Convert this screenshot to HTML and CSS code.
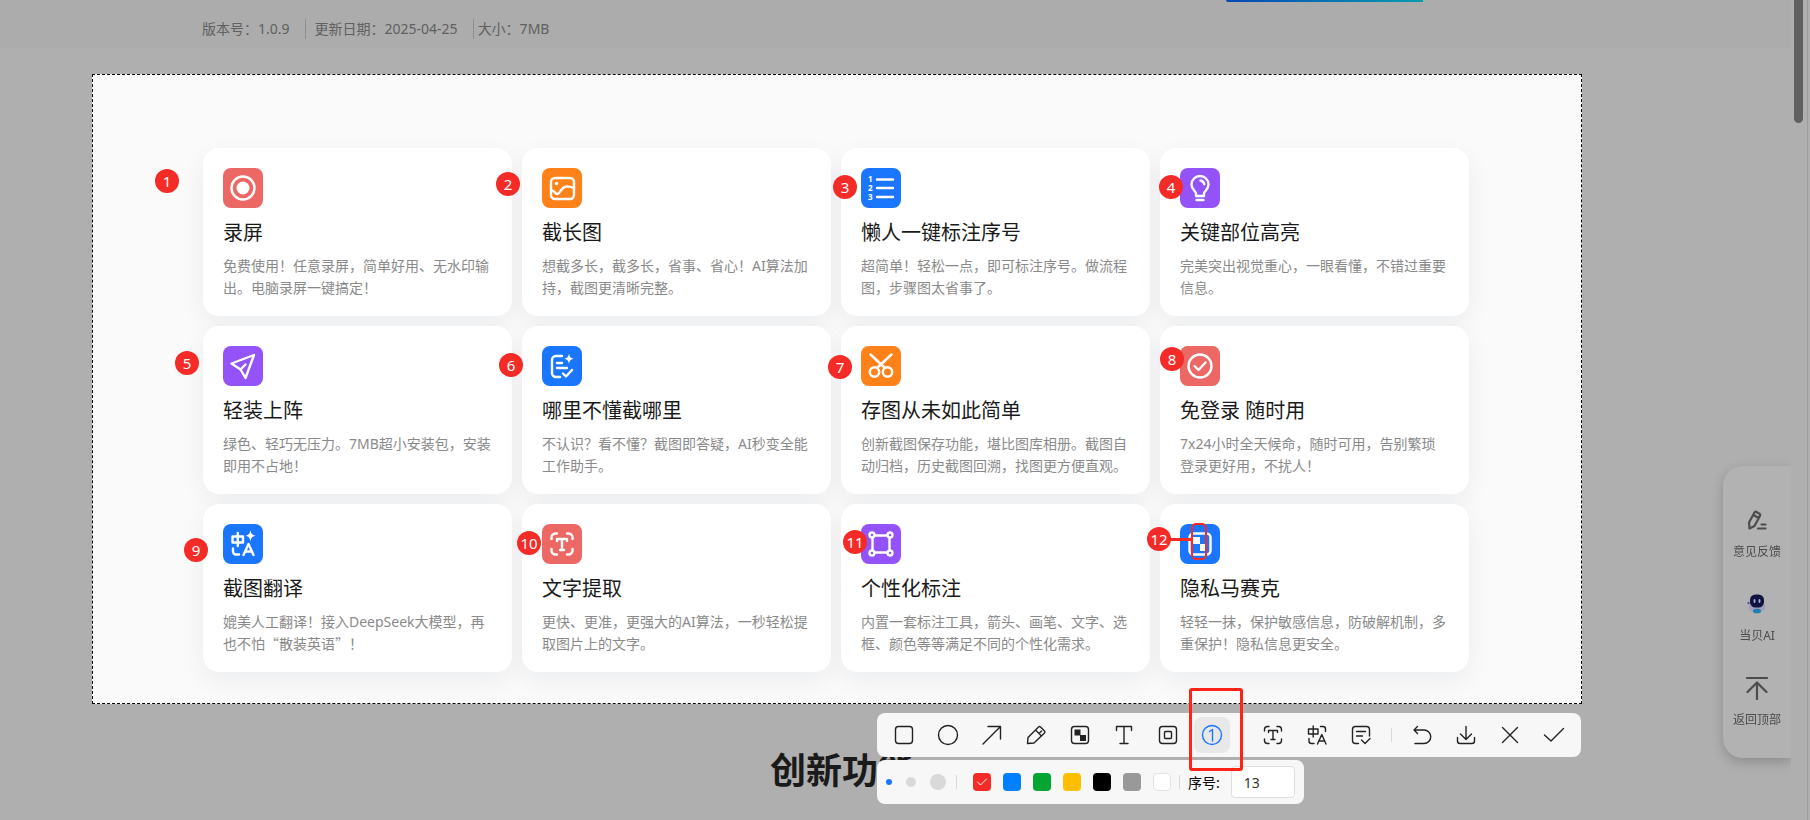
FILE: index.html
```html
<!DOCTYPE html>
<html lang="zh-CN">
<head>
    <meta charset="UTF-8">
    <meta name="viewport" content="width=device-width, initial-scale=1.0">
    <title>创新功能</title>
    <link rel="stylesheet" href="styles.css">
</head>
<body>
    <header class="top">
        <div class="meta">
            <span class="meta-item">版本号：1.0.9</span>
            <span class="meta-item">更新日期：2025-04-25</span>
            <span class="meta-item">大小：7MB</span>
        </div>
        <div class="download"></div>
    </header>

    <main class="selection">
        <div class="cards">
            <section class="card">
                <svg class="card-icon red" viewBox="0 0 40 40"><circle cx="20" cy="20" r="11.500"/><circle class="fill" cx="20" cy="20" r="6.500"/></svg>
                <h3>录屏</h3>
                <p>免费使用！任意录屏，简单好用、无水印输出。电脑录屏一键搞定！</p>
            </section>
            <section class="card">
                <svg class="card-icon orange" viewBox="0 0 40 40"><rect x="9" y="10" width="23" height="21" rx="4"/><circle class="fill" cx="14.5" cy="15.5" r="1.8"/><path d="M9 22c3 0 4 4 6.500 4s3.500-7 9-7.500c3-.3 5 .5 7.500 1.500"/></svg>
                <h3>截长图</h3>
                <p>想截多长，截多长，省事、省心！AI算法加持，截图更清晰完整。</p>
            </section>
            <section class="card">
                <svg class="card-icon blue" viewBox="0 0 40 40"><path d="M16 11.500h16M16 20h16M16 29h16"/><text x="7" y="14">1</text><text x="7" y="23">2</text><text x="7" y="32">3</text></svg>
                <h3>懒人一键标注序号</h3>
                <p>超简单！轻松一点，即可标注序号。做流程图，步骤图太省事了。</p>
            </section>
            <section class="card">
                <svg class="card-icon purple" viewBox="0 0 40 40"><path d="M16 28v-2.500c0-2-4.500-4-4.500-9a8.500 8.500 0 0 1 17 0c0 5-4.500 7-4.500 9V28zM16.500 32h7M20.500 12.500c2 .3 3.500 1.800 3.800 3.800"/></svg>
                <h3>关键部位高亮</h3>
                <p>完美突出视觉重心，一眼看懂，不错过重要信息。</p>
            </section>
            <section class="card">
                <svg class="card-icon purple" viewBox="0 0 40 40"><path d="M8.500 17.500 31 9l-8.500 23-5-8.500zM17.500 23.500l5-5"/></svg>
                <h3>轻装上阵</h3>
                <p>绿色、轻巧无压力。7MB超小安装包，安装即用不占地！</p>
            </section>
            <section class="card">
                <svg class="card-icon blue" viewBox="0 0 40 40"><path d="M20 10h-6a4 4 0 0 0-4 4v13a4 4 0 0 0 4 4h4M15 17h5M15 22h10M21 27.500l3 3 6-6.500"/><path class="fill" d="M27 7.500c.6 3.500 1.800 4.600 5 5.200-3.200.6-4.400 1.800-5 5.200-.6-3.400-1.800-4.600-5-5.200 3.200-.6 4.400-1.700 5-5.200z"/></svg>
                <h3>哪里不懂截哪里</h3>
                <p>不认识？看不懂？截图即答疑，AI秒变全能工作助手。</p>
            </section>
            <section class="card">
                <svg class="card-icon orange" viewBox="0 0 40 40"><circle cx="13.5" cy="26" r="4.700"/><circle cx="26.500" cy="26" r="4.700"/><path d="M9.500 8.500 24 22M30.500 8.500 16 22"/></svg>
                <h3>存图从未如此简单</h3>
                <p>创新截图保存功能，堪比图库相册。截图自动归档，历史截图回溯，找图更方便直观。</p>
            </section>
            <section class="card">
                <svg class="card-icon red" viewBox="0 0 40 40"><circle cx="20" cy="20" r="11.500"/><path d="M14.500 20l4 4 7-7.500"/></svg>
                <h3>免登录 随时用</h3>
                <p>7x24小时全天候命，随时可用，告别繁琐<br>登录更好用，不扰人！</p>
            </section>
            <section class="card">
                <svg class="card-icon blue" viewBox="0 0 40 40"><path d="M9.500 12.500h10.500v6H9.500zM14.800 9v13M10 24.500v3a3 3 0 0 0 3 3h3M20.500 31l5-11 5 11M22 27.500h7"/><path class="fill" d="M27.500 6c.6 3.800 1.800 5 5 5.700-3.200.7-4.400 1.900-5 5.700-.6-3.800-1.800-5-5-5.700 3.200-.7 4.400-1.900 5-5.700z"/></svg>
                <h3>截图翻译</h3>
                <p>媲美人工翻译！接入DeepSeek大模型，再也不怕<span class="cjk">“散装英语”</span>！</p>
            </section>
            <section class="card">
                <svg class="card-icon red" viewBox="0 0 40 40"><path d="M9.500 15v-1.500a4 4 0 0 1 4-4H15M25 9.500h1.500a4 4 0 0 1 4 4V15M30.500 25v1.500a4 4 0 0 1-4 4H25M15 30.500h-1.500a4 4 0 0 1-4-4V25M15 17v-2h10v2M20 15v11M18 26h4"/></svg>
                <h3>文字提取</h3>
                <p>更快、更准，更强大的AI算法，一秒轻松提取图片上的文字。</p>
            </section>
            <section class="card">
                <svg class="card-icon purple" viewBox="0 0 40 40"><circle cx="11" cy="11" r="2.500"/><circle cx="29" cy="11" r="2.500"/><circle cx="11" cy="29" r="2.500"/><circle cx="29" cy="29" r="2.500"/><path d="M13.500 11.500h13M13.500 28.500h13M11.500 13.500v13M28.500 13.500v13"/></svg>
                <h3>个性化标注</h3>
                <p>内置一套标注工具，箭头、画笔、文字、选框、颜色等等满足不同的个性化需求。</p>
            </section>
            <section class="card">
                <svg class="card-icon blue" viewBox="0 0 40 40"><rect x="9.500" y="9.500" width="21" height="21" rx="4"/><path class="fill" d="M13 13h7v7h-7zM20 20h7v7h-7z"/></svg>
                <h3>隐私马赛克</h3>
                <p>轻轻一抹，保护敏感信息，防破解机制，多重保护！隐私信息更安全。</p>
            </section>
        </div>

        <!-- marks placed on the capture -->
        <div class="marks">
            <span class="frame"></span>
            <span class="leader"></span>
            <span class="mark m1">1</span>
            <span class="mark m2">2</span>
            <span class="mark m3">3</span>
            <span class="mark m4">4</span>
            <span class="mark m5">5</span>
            <span class="mark m6">6</span>
            <span class="mark m7">7</span>
            <span class="mark m8">8</span>
            <span class="mark m9">9</span>
            <span class="mark m10">10</span>
            <span class="mark m11">11</span>
            <span class="mark m12">12</span>
        </div>

        <div class="tools">
            <div class="toolbar">
                <button class="tool" aria-label="矩形"><svg viewBox="0 0 24 24"><rect x="3.500" y="3.500" width="17" height="17" rx="3"/></svg></button>
                <button class="tool" aria-label="椭圆"><svg viewBox="0 0 24 24"><circle cx="12" cy="12" r="9.500"/></svg></button>
                <button class="tool" aria-label="箭头"><svg viewBox="0 0 24 24"><path d="M3 21 20.500 3.500M8 3.500h12.500V16"/></svg></button>
                <button class="tool" aria-label="画笔"><svg viewBox="0 0 24 24"><path d="M3.500 20.500l.5-6L14.500 4a1.500 1.500 0 0 1 2 0l4 4a1.500 1.500 0 0 1 0 2L10 20zM11.500 7l6 6M15 10.500l2.500-2.500"/></svg></button>
                <button class="tool" aria-label="马赛克"><svg viewBox="0 0 24 24"><rect x="3.500" y="3.500" width="17" height="17" rx="3"/><path class="ink" d="M6.500 6.500h6v6h-6zM12 12h6v6h-6z"/></svg></button>
                <button class="tool" aria-label="文字"><svg viewBox="0 0 24 24"><path d="M4.500 7.500v-4h15v4M12 3.500v17M8 20.500h8"/></svg></button>
                <button class="tool" aria-label="高亮"><svg viewBox="0 0 24 24"><rect x="3.500" y="3.500" width="17" height="17" rx="3"/><rect x="8.500" y="8.500" width="7" height="7" rx="1"/></svg></button>
                <button class="tool active" aria-label="序号"><svg viewBox="0 0 24 24"><circle cx="12" cy="12" r="9.500"/><path d="M9.500 8.500 12.500 6.500V18"/></svg></button>
                <span class="gap"></span>
                <button class="tool" aria-label="文字提取"><svg viewBox="0 0 24 24"><path d="M3.500 8V6.500a3 3 0 0 1 3-3H8M16 3.500h1.500a3 3 0 0 1 3 3V8M20.500 16v1.500a3 3 0 0 1-3 3H16M8 20.500H6.500a3 3 0 0 1-3-3V16M7.500 9.500v-2h9v2M12 7.500v9M10 16.500h4"/></svg></button>
                <button class="tool" aria-label="截图翻译"><svg viewBox="0 0 24 24"><path d="M3.500 6h9.500v5H3.500zM8.200 3v11M4 15.500V18a2.500 2.500 0 0 0 2.500 2.500H9M12.500 21 16.800 11.500 21 21M14 18h5.500M15.500 3.500H18a2.500 2.500 0 0 1 2.500 2.500v2.500"/></svg></button>
                <button class="tool" aria-label="答疑"><svg viewBox="0 0 24 24"><path d="M9.500 20.500h-3a3 3 0 0 1-3-3v-11a3 3 0 0 1 3-3h11a3 3 0 0 1 3 3V13M7.500 8.500h9M7.500 13h6M12.500 17l3.500 3.500 5-5"/></svg></button>
                <span class="gap"><i class="line"></i></span>
                <button class="tool" aria-label="撤销"><svg viewBox="0 0 24 24"><path d="M7.500 3.500 4 7l3.500 3.500M4 7h10a6.700 6.700 0 0 1 0 13.500H5"/></svg></button>
                <button class="tool" aria-label="保存"><svg viewBox="0 0 24 24"><path d="M12 3.500V16M6.500 11l5.500 5.500 5.500-5.500M3.500 14.500V18a2.500 2.500 0 0 0 2.500 2.500h12a2.500 2.500 0 0 0 2.500-2.500v-3.500"/></svg></button>
                <button class="tool" aria-label="取消"><svg viewBox="0 0 24 24"><path d="M4.500 4.500l15 15M19.500 4.500l-15 15"/></svg></button>
                <button class="tool" aria-label="完成"><svg viewBox="0 0 24 24"><path d="M2.500 12 9 18 21.500 5.500"/></svg></button>
            </div>

            <div class="toolbar options">
                <div class="sizes">
                    <button class="dot small" aria-label="小"></button>
                    <button class="dot medium" aria-label="中"></button>
                    <button class="dot large" aria-label="大"></button>
                </div>
                <i class="line"></i>
                <div class="colors">
                    <button class="swatch c-red" aria-label="红"><svg viewBox="0 0 18 18"><path d="M4.500 9l3 3 6-6"/></svg></button>
                    <button class="swatch c-blue" aria-label="蓝"></button>
                    <button class="swatch c-green" aria-label="绿"></button>
                    <button class="swatch c-yellow" aria-label="黄"></button>
                    <button class="swatch c-black" aria-label="黑"></button>
                    <button class="swatch c-gray" aria-label="灰"></button>
                    <button class="swatch c-white" aria-label="白"></button>
                </div>
                <i class="line"></i>
                <label class="num-label" for="num">序号:</label>
                <input class="num" id="num" type="text" value="13">
            </div>
            <span class="highlight"></span>
        </div>
    </main>

    <h2 class="heading">创新功能</h2>

    <aside class="side">
        <a class="side-item" href="#"><svg viewBox="0 0 24 24"><path d="M4.500 20.500 4 14.500l5.500-10a1.500 1.500 0 0 1 2-.5l3 1.700a1.500 1.500 0 0 1 .5 2L9.500 18zM8.500 7l5 3M16.500 16.500h4M13 20.500h7.500"/></svg>意见反馈</a>
        <a class="side-item" href="#"><svg viewBox="0 0 24 24"><g stroke="none"><ellipse cx="12" cy="14.500" rx="8.500" ry="6.500" fill="#a29dbb"/><circle cx="3.500" cy="11" r="1.200" fill="#5d5790"/><rect x="5" y="2.500" width="14" height="13" rx="5.500" fill="#10123f"/><ellipse cx="9.500" cy="9" rx="1" ry="2" fill="#a9b7e6"/><ellipse cx="14.500" cy="9" rx="1" ry="2" fill="#a9b7e6"/><ellipse cx="12" cy="19" rx="4" ry="2.300" fill="#1c7fae"/></g></svg>当贝AI</a>
        <a class="side-item" href="#"><svg viewBox="0 0 24 24"><path d="M2 2h20M12 23V7M2.500 16 12 6.500l9.500 9.500"/></svg>返回顶部</a>
    </aside>

    <div class="scroll"><div class="thumb"></div></div>
</body>
</html>
```

FILE: styles.css
```css
* {
    box-sizing: border-box;
}

body {
    margin: 0;
    min-height: 100vh;
    overflow: hidden;
    background-color: #afafaf;
    color: #1a1a1a;
    font-family: "Noto Sans", "Noto Sans CJK SC", sans-serif;
    font-size: 14px;
}

button {
    padding: 0;
    border: none;
    background: none;
    cursor: pointer;
}

svg {
    display: block;
    fill: none;
    stroke: currentColor;
    stroke-linecap: round;
    stroke-linejoin: round;
}

/* top bar */
.top {
    display: flex;
    justify-content: space-between;
    align-items: flex-start;
    height: 48px;
    margin-right: 19px;
    padding: 0 368px 0 202px;
    background-color: #acacac;
}

.meta {
    display: flex;
    padding-top: 19px;
    color: #606060;
    line-height: 20px;
}

.meta-item {
    padding-right: 15px;
}

.meta-item + .meta-item {
    padding-left: 9px;
    border-left: 1px solid #8e8e8e;
}

.meta-item:last-child {
    padding-left: 4px;
}

.download {
    width: 197px;
    height: 2px;
    border-bottom-left-radius: 4px;
    background: linear-gradient(90deg, #0747b4, #0a9cb0);
}

/* captured area */
.selection {
    position: relative;
    margin: 26px 228px 0 92px;
    padding: 73px 22px 31px 20px;
    border: 1px dashed #000;
    background-color: #fafafa;
}

.cards {
    display: grid;
    grid-template-columns: repeat(4, 1fr);
    gap: 10px;
    max-width: 1266px;
    margin: 0 auto;
}

.card {
    padding: 20px 20px 17px;
    border-radius: 16px;
    background-color: #fff;
    box-shadow: 0 8px 24px rgba(20, 40, 60, 0.06);
}

.card h3 {
    margin: 10px 0 7px;
    font-size: 20px;
    font-weight: 400;
    line-height: 30px;
}

.card p {
    margin: 0;
    color: #8a8a8a;
    line-height: 22px;
}

/* full-width quotation marks */
.cjk {
    font-family: "Noto Sans CJK SC", sans-serif;
    line-height: 1;
}

.card-icon {
    width: 40px;
    height: 40px;
    border-radius: 8px;
    color: #fff;
    stroke-width: 2.4;
}

.card-icon .fill {
    fill: #fff;
    stroke: none;
}

.card-icon text {
    fill: #fff;
    stroke: none;
    font-size: 8px;
    font-weight: 700;
}

.red { background-color: #eb6864; }
.orange { background-color: #ff811a; }
.blue { background-color: #1b76ff; }
.purple { background-color: #9353f9; }

/* numbered marks, placed freely on the capture */
.marks {
    position: absolute;
    inset: -1px 0 0;
}

.mark {
    position: absolute;
    width: 24px;
    height: 24px;
    border-radius: 12px;
    background-color: #f42b26;
    color: #fff;
    font-size: 15px;
    line-height: 24px;
    text-align: center;
}

.m1 { left: 62px; top: 95px; }
.m2 { left: 403px; top: 98px; }
.m3 { left: 740px; top: 101px; }
.m4 { left: 1066px; top: 101px; }
.m5 { left: 82px; top: 277px; }
.m6 { left: 406px; top: 279px; }
.m7 { left: 735px; top: 281px; }
.m8 { left: 1067px; top: 273px; }
.m9 { left: 91px; top: 464px; }
.m10 { left: 424px; top: 457px; }
.m11 { left: 750px; top: 456px; }
.m12 { left: 1054px; top: 453px; }

.leader {
    position: absolute;
    left: 1074px;
    top: 464px;
    width: 25px;
    height: 3px;
    background-color: #f42b26;
}

.frame {
    position: absolute;
    left: 1098px;
    top: 449px;
    width: 16px;
    height: 37px;
    border: 2px solid #f42b26;
    border-radius: 5px;
}

/* toolbars */
.tools {
    position: absolute;
    top: calc(100% + 10px);
    right: 0;
    display: flex;
    flex-direction: column;
    align-items: flex-start;
    gap: 3px;
}

.toolbar {
    display: flex;
    align-items: center;
    gap: 8px;
    height: 44px;
    padding: 0 9px;
    border-radius: 8px;
    background-color: #f7f7f7;
}

.tool {
    display: flex;
    align-items: center;
    justify-content: center;
    width: 36px;
    height: 36px;
    border-radius: 8px;
    color: #222;
}

.tool svg {
    width: 24px;
    height: 24px;
    stroke-width: 1.4;
}

.tool .ink {
    fill: currentColor;
    stroke: none;
}

.active {
    background-color: #e8e8e8;
    color: #1b76ff;
}

.gap {
    display: flex;
    justify-content: center;
    width: 9px;
}

.line {
    width: 1px;
    height: 14px;
    background-color: #d9d9d9;
}

.sizes {
    display: flex;
    align-items: center;
    gap: 14px;
    margin-right: 2px;
}

.dot {
    border-radius: 50%;
    background-color: #d9d9d9;
}

.small {
    width: 6px;
    height: 6px;
    background-color: #1b76ff;
}

.medium {
    width: 10px;
    height: 10px;
}

.large {
    width: 16px;
    height: 16px;
}

.colors {
    display: flex;
    gap: 12px;
    margin-left: 8px;
}

.swatch {
    width: 18px;
    height: 18px;
    border-radius: 4px;
    color: #fff;
}

.c-red { background-color: #f42b26; }
.c-blue { background-color: #0080ff; }
.c-green { background-color: #05a532; }
.c-yellow { background-color: #ffbf00; }
.c-black { background-color: #000; }
.c-gray { background-color: #999; }

.c-white {
    border: 1px solid #e3e3e3;
    background-color: #fff;
}

.num-label {
    color: #000;
}

.num {
    width: 64px;
    height: 32px;
    margin-left: 3px;
    padding: 0 12px;
    border: 1px solid #dedede;
    border-radius: 4px;
    background-color: #fff;
    color: #333;
    font: inherit;
}

.highlight {
    position: absolute;
    top: -25px;
    left: 312px;
    width: 54px;
    height: 83px;
    border: 3px solid #ff2216;
    border-radius: 3px;
}

.heading {
    margin: 40px 218px 0 92px;
    font-size: 36px;
    line-height: 54px;
    text-align: center;
}

/* floating links */
.side {
    position: fixed;
    right: 19px;
    bottom: 62px;
    display: flex;
    flex-direction: column;
    gap: 31px;
    width: 68px;
    padding: 42px 0 29px;
    border-radius: 20px 0 0 20px;
    background-color: #b2b2b2;
    box-shadow: 0 4px 12px rgba(0, 0, 0, 0.2);
}

.side-item {
    display: flex;
    flex-direction: column;
    align-items: center;
    gap: 11px;
    color: #4c4c4c;
    font-size: 12px;
    line-height: 18px;
    text-decoration: none;
}

.side-item svg {
    width: 24px;
    height: 24px;
    stroke-width: 2.2;
}

.scroll {
    position: fixed;
    top: 0;
    right: 0;
    bottom: 0;
    width: 19px;
    padding: 0 7px 0 3px;
    background: linear-gradient(#9c9c9c, #9c9c9c) 16px 0 / 1px 100% no-repeat #afafaf;
}

.thumb {
    height: 15%;
    border-radius: 0 0 5px 5px;
    background-color: #606060;
}
```
